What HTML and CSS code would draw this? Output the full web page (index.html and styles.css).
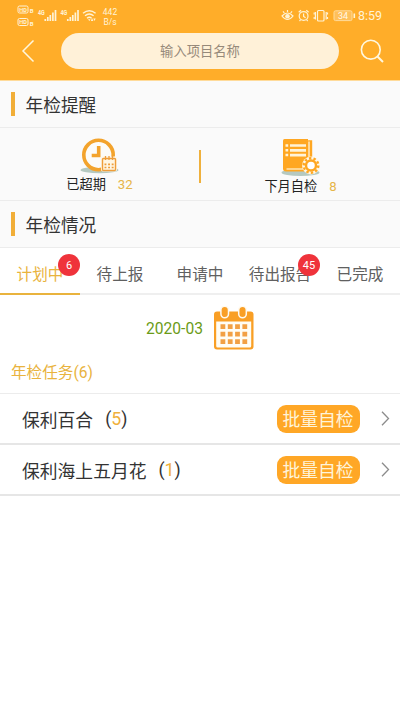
FILE: index.html
```html
<!DOCTYPE html>
<html lang="zh-CN">
<head>
<meta charset="utf-8">
<title>年检</title>
<link rel="stylesheet" href="styles.css">
</head>
<body>
<header class="header">
  <div class="status">
    <svg class="status-left" width="84" height="26" viewBox="16 4 84 26">
      <g fill="none" stroke="#fff3d6" stroke-width="1">
        <rect x="18" y="6" width="10" height="7" rx="1.500"/>
        <rect x="18" y="18.500" width="10" height="7" rx="1.500"/>
      </g>
      <g fill="#fff3d6" class="tiny">
        <text x="19.200" y="11.800" textLength="7.600" lengthAdjust="spacingAndGlyphs">HD</text>
        <text x="19.200" y="24.300" textLength="7.600" lengthAdjust="spacingAndGlyphs">HD</text>
        <text x="29.800" y="13">B</text>
        <text x="29.800" y="25.500">B</text>
        <text class="net" x="38" y="15" textLength="6.800" lengthAdjust="spacingAndGlyphs">4G</text>
        <text class="net" x="60.500" y="15" textLength="6.800" lengthAdjust="spacingAndGlyphs">4G</text>
      </g>
      <g stroke="#fff3d6" stroke-width="1.700">
        <path d="M45.300 21v-2M47.800 21v-4M50.300 21v-6M52.900 21v-8.500M55.500 21V10"/>
        <path d="M67.800 21v-2M70.300 21v-4M72.800 21v-6M75.400 21v-8.500M78 21V10"/>
      </g>
      <g fill="none" stroke="#fff3d6" stroke-width="1.400">
        <path d="M83 13.300q6.300-5.200 12.600 0M85 15.800q4.300-3.500 8.600 0M87 18.200q2.300-1.800 4.600 0"/>
      </g>
      <path fill="#fff3d6" d="M88 19.300h2.600L89.300 21zM92 18l1.400 3h-2.500zM94.500 21l-1.200-2.500h2.400z"/>
    </svg>
    <div class="speed"><span>442</span><span>B/s</span></div>
    <svg class="status-right" width="76" height="16" viewBox="280 8 76 16">
      <g fill="none" stroke="#fff3d6" stroke-width="1.200">
        <path d="M282 16q5.500-6 11 0-5.500 7-11 0zM287.500 12v-2M284.300 13l-1.300-1.700M290.700 13l1.300-1.700"/>
        <circle cx="303.600" cy="16" r="4.400"/>
        <path d="M303.600 13.400v3l2 1.300M298.700 12.300l2.300-2M306.300 10.300l2.300 2M300.500 19.800l-1 1.200M306.700 19.800l1 1.200"/>
        <rect x="317.500" y="10.500" width="6.500" height="10.500" rx="1"/>
        <path d="M315.400 12v7.500M326.200 12v7.500"/>
        <path d="M314.200 12.500v2M314.200 17v2M327.500 12.500v2M327.500 17v2"/>
      </g>
      <circle cx="287.500" cy="16.300" r="2.300" fill="#fff3d6"/>
      <rect x="334" y="10.800" width="18" height="9.800" rx="1.500" fill="#ffc05a" stroke="#ffdb9a"/>
      <path d="M354.300 13.500v4.500" stroke="#fff3d6" stroke-width="1.600"/>
      <text class="battery" x="338" y="19" fill="#fff8e8">34</text>
    </svg>
    <span class="time">8:59</span>
  </div>
  <div class="search-row">
    <svg class="back" width="14" height="24" viewBox="0 0 14 24"><path d="M12.500 1.500 2 12l10.500 10.500" fill="none" stroke="#fff7df" stroke-width="1.500"/></svg>
    <div class="search">输入项目名称</div>
    <svg class="find" width="24" height="24" viewBox="0 0 24 24"><g fill="none" stroke="#fff7df" stroke-width="1.600"><circle cx="10.800" cy="10.700" r="9.400"/><path d="m17.500 17.500 5.500 5.500" stroke-width="2"/></g></svg>
  </div>
</header>

<h2 class="section">年检提醒</h2>
<div class="stats">
  <div class="stat stat-overdue">
    <svg width="40" height="38" viewBox="0 0 40 38">
      <ellipse cx="19.500" cy="32" rx="19" ry="3.200" fill="#b5c9c1"/>
      <circle cx="18.500" cy="17" r="14.700" fill="#fcfbf8" stroke="#f3a32c" stroke-width="3.600"/>
      <path d="M18.700 8v9.500h-7" fill="none" stroke="#f3a32c" stroke-width="3.600"/>
      <rect x="21" y="18.500" width="16" height="15" rx="2" fill="#fff6e3"/>
      <rect x="22.500" y="20.500" width="13" height="12" rx="1" fill="#fff6e3" stroke="#ee9d3a" stroke-width="1.400"/>
      <path d="M25.500 18v4M29 18v4M32.500 18v4" stroke="#ee9d3a" stroke-width="1.300"/>
      <path d="M24.500 26.300h9.500M24.500 29.500h9.500" stroke="#ee9d3a" stroke-width="1.700" stroke-dasharray="1.900 1.700"/>
    </svg>
    <div class="stat-label">已超期<b>32</b></div>
  </div>
  <i class="divider"></i>
  <div class="stat stat-next">
    <svg width="40" height="38" viewBox="0 0 40 38">
      <ellipse cx="19.500" cy="33.500" rx="19" ry="3.600" fill="#b5c9c1"/>
      <path d="M28 1.200h3.200v30H8V4z" fill="#ffa722"/>
      <path d="M28 2.500v26" stroke="#fff3d8" stroke-width="1.300"/>
      <path d="M3.500 0H27V32.500H5a3 3 0 0 1-3-3V1.500Q2 0 3.500 0z" fill="#ffa722"/>
      <path d="M9 6.500h16M9 11.300h16M9 16.100h16" stroke="#fff3d8" stroke-width="2.700"/>
      <path d="M4.500 6.500h2.700M4.500 11.300h2.700M4.500 16.100h2.700" stroke="#fff3d8" stroke-width="2.500"/>
      <path d="M5.500 30h17" stroke="#fff3d8" stroke-width="1.200"/>
      <circle cx="30" cy="26.500" r="9" fill="#fff8e8"/>
      <circle cx="30" cy="26.500" r="7.300" fill="none" stroke="#ffa722" stroke-width="2.400" stroke-dasharray="2.400 2.187"/>
      <circle cx="30" cy="26.500" r="5" fill="#fff" stroke="#ffa722" stroke-width="2.500"/>
    </svg>
    <div class="stat-label">下月自检<b>8</b></div>
  </div>
</div>

<h2 class="section">年检情况</h2>
<nav class="tabs">
  <div class="tab active"><span>计划中</span><em>6</em></div>
  <div class="tab"><span>待上报</span></div>
  <div class="tab"><span>申请中</span></div>
  <div class="tab"><span>待出报告</span><em>45</em></div>
  <div class="tab"><span>已完成</span></div>
</nav>

<div class="month">
  <span>2020-03</span>
  <svg width="40" height="44" viewBox="0 0 40 44">
    <rect x="0" y="5.500" width="39.500" height="38" rx="3" fill="#f99f25"/>
    <path d="M2.200 15.500h35V40q0 1.500-1.500 1.500h-32q-1.500 0-1.500-1.500z" fill="#fffdf5"/>
    <g fill="#f99f25" stroke="#fffaf0" stroke-width="1.500"><rect x="6.900" y=".2" width="7.600" height="11.600" rx="3.800"/><rect x="24.700" y=".2" width="7.600" height="11.600" rx="3.800"/></g>
    <path d="M6.500 20.700h27.500M6.500 28.200h27.500M6.500 35.700h27.500" stroke="#f2a044" stroke-width="4.800" stroke-dasharray="4.800 2.500"/>
  </svg>
</div>

<h3 class="tasks-title">年检任务(6)</h3>
<ul class="tasks">
  <li><span class="name">保利百合</span><span class="count">(<b>5</b>)</span><button>批量自检</button><svg width="9" height="15" viewBox="0 0 9 15"><path d="m1 .8 6.500 6.700L1 14.200" fill="none" stroke="#8c8c8c" stroke-width="1.300"/></svg></li>
  <li><span class="name">保利海上五月花</span><span class="count">(<b>1</b>)</span><button>批量自检</button><svg width="9" height="15" viewBox="0 0 9 15"><path d="m1 .8 6.500 6.700L1 14.200" fill="none" stroke="#8c8c8c" stroke-width="1.300"/></svg></li>
</ul>
</body>
</html>
```
FILE: styles.css
```css
* { box-sizing: border-box; }
body {
  margin: 0;
  min-height: 711px;
  background: #fff;
  color: #333;
  font-family: Roboto, "Noto Sans CJK SC", sans-serif;
}
svg { display: block; flex: none; }
h2, h3, ul { margin: 0; padding: 0; font-weight: 400; }
b, em { font-weight: 400; font-style: normal; }

.header { height: 81px; background: #ffad29; border-bottom: 1px solid #ffdb9a; }
.status { display: flex; height: 33px; padding: 4px 17px 0 16px; color: #fff3d6; }
.tiny { font-size: 6px; font-weight: 700; }
.net { font-size: 7.500px; }
.speed { display: flex; flex-direction: column; width: 20px; padding-top: 3px; font-size: 8.500px; line-height: 10px; }
.speed span { text-align: center; }
.status-right { margin: 4px 0 0 auto; }
.battery { font-size: 9px; }
.time { width: 25px; margin-left: 2px; font-size: 12.500px; line-height: 24px; white-space: nowrap; }
.search-row { display: flex; align-items: center; height: 36px; padding: 0 16px 0 21px; }
.search {
  width: 278px;
  height: 36px;
  margin-left: 26px;
  border-radius: 18px;
  background: #fff1d8;
  color: #96897a;
  font-size: 13.300px;
  line-height: 38px;
  text-align: center;
}
.find { margin-left: auto; }

.section {
  display: flex;
  align-items: center;
  height: 47px;
  padding-left: 11px;
  border-bottom: 1px solid #ececec;
  background: #fafafa;
  font-size: 17.700px;
}
.section::before { content: ""; width: 3.500px; height: 24px; margin-right: 11px; background: #f1ae38; }

.stats { display: flex; align-items: center; height: 73px; border-bottom: 1px solid #ececec; background: #fafafa; }
.stat { flex: 1; display: flex; flex-direction: column; align-items: center; height: 72px; }
.stat-overdue { padding-top: 10px; }
.stat-next { padding-top: 11px; }
.stat-label { display: flex; font-size: 13.200px; line-height: 18px; color: #222; white-space: nowrap; }
.stat-next .stat-label { margin-top: 1px; }
.stat-label b { margin-left: 12px; color: #e6b548; }
.divider { width: 2px; height: 33px; margin-top: 5px; background: #efb03c; }

.tabs { display: grid; grid-template-columns: repeat(5, 1fr); height: 47px; border-bottom: 2px solid #efefef; }
.tab { position: relative; height: 47px; font-size: 15.600px; line-height: 55px; color: #606060; text-align: center; white-space: nowrap; }
.active { color: #e9b33e; border-bottom: 2px solid #e9b33e; }
.tab em {
  position: absolute;
  top: 6px;
  right: 0;
  width: 22px;
  height: 22px;
  border-radius: 50%;
  background: #ef333b;
  color: #fff;
  font-size: 11px;
  line-height: 23px;
}

.month { display: flex; align-items: center; justify-content: center; height: 66px; gap: 11px; color: #6b9b17; font-size: 15.600px; }
.month span { margin-top: 2px; }
.tasks-title { height: 33px; padding-left: 11px; border-bottom: 1px solid #ececec; color: #e9b33e; font-size: 15.600px; line-height: 24px; }
.tasks { list-style: none; }
.tasks li { display: flex; align-items: center; height: 51px; padding: 0 10px 0 22px; border-bottom: 2px solid #e6e6e6; font-size: 17.800px; }
.count { margin-left: 12px; }
.count b { color: #efb03c; }
.tasks button {
  width: 83px;
  height: 28px;
  margin: 0 21.500px 0 auto;
  padding: 0;
  border: 0;
  border-radius: 9px;
  background: #ffa726;
  color: #fff4da;
  font: inherit;
  line-height: 29px;
}
```
